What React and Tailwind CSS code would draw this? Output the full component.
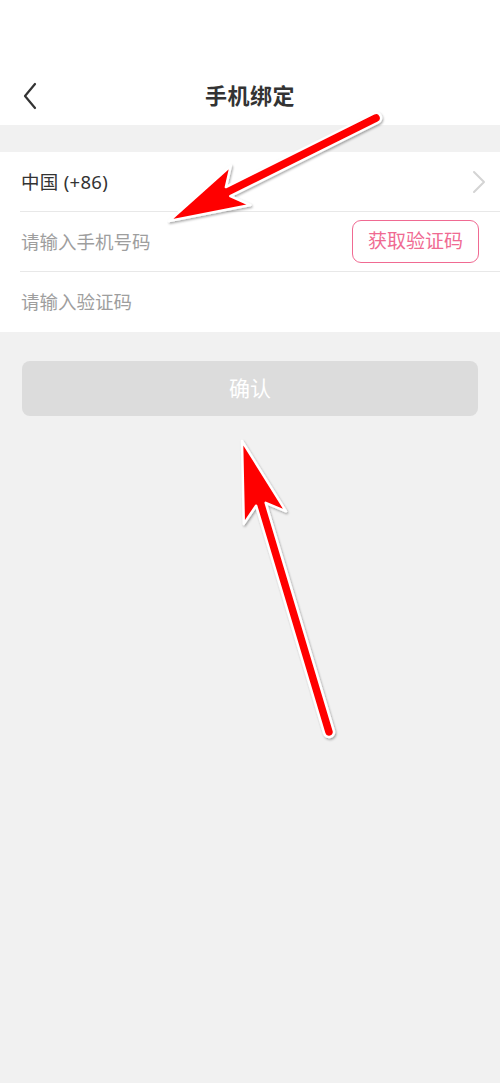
import React from 'react';

function arrowPath(tail, tip, opts) {
  const { head = 80, half = 22, notch = 66, w = 5 } = opts || {};
  const dx = tip[0] - tail[0];
  const dy = tip[1] - tail[1];
  const len = Math.hypot(dx, dy);
  const ux = dx / len, uy = dy / len;
  const px = -uy, py = ux;
  const pt = (d, o) => [tip[0] - ux * d + px * o, tip[1] - uy * d + py * o];
  const c1 = pt(head, half);
  const n1 = pt(notch, w);
  const t1 = [tail[0] + px * w, tail[1] + py * w];
  const t2 = [tail[0] - px * w, tail[1] - py * w];
  const n2 = pt(notch, -w);
  const c2 = pt(head, -half);
  const f = (p) => `${p[0].toFixed(1)} ${p[1].toFixed(1)}`;
  return `M ${f(tip)} L ${f(c1)} L ${f(n1)} L ${f(t1)} A ${w} ${w} 0 0 1 ${f(t2)} L ${f(n2)} L ${f(c2)} Z`;
}

function Arrows() {
  return (
    <svg className="absolute inset-0 pointer-events-none" width="500" height="1083" viewBox="0 0 500 1083">
      <defs>
        <filter id="sh" x="-20%" y="-20%" width="140%" height="140%">
          <feDropShadow dx="1" dy="1.5" stdDeviation="1.2" floodColor="#000" floodOpacity="0.35" />
        </filter>
      </defs>
      <g filter="url(#sh)">
        <path d={arrowPath([376, 118], [169, 221])} fill="#ff0000" stroke="#fff" strokeWidth="2.5" strokeLinejoin="round" />
        <path d={arrowPath([329, 732], [242, 441])} fill="#ff0000" stroke="#fff" strokeWidth="2.5" strokeLinejoin="round" />
      </g>
    </svg>
  );
}

export default function App() {
  return (
    <div
      className="relative min-h-[1083px] w-[500px] bg-[#f1f1f1] overflow-hidden"
      style={{ fontFamily: '"Noto Sans", "Noto Sans CJK SC", sans-serif' }}
    >
      <header className="bg-white h-[125px] pt-[66px]">
        <div className="relative h-[59px] flex items-center justify-center">
          <button className="absolute left-[18px] top-1/2 -translate-y-1/2 p-1">
            <svg width="16" height="28" viewBox="0 0 16 28" fill="none">
              <path d="M13 2 L3 14 L13 26" stroke="#333" strokeWidth="2.2" strokeLinecap="round" strokeLinejoin="round" />
            </svg>
          </button>
          <h1 className="text-[22px] font-bold text-[#333] tracking-[0.5px]">手机绑定</h1>
        </div>
      </header>

      <section className="mt-[27px] bg-white">
        <div className="ml-5 h-[60px] border-b border-[#e8e8e8] flex items-center justify-between pr-[14px]">
          <span className="pl-px text-[18.5px] text-[#333] tracking-[0.3px]">中国 (+86)</span>
          <svg width="14" height="24" viewBox="0 0 14 24" fill="none">
            <path d="M2 2 L12 12 L2 22" stroke="#d4d4d4" strokeWidth="2" strokeLinecap="round" strokeLinejoin="round" />
          </svg>
        </div>
        <div className="ml-5 h-[60px] border-b border-[#e8e8e8] flex items-center justify-between pr-[21px]">
          <span className="pl-px text-[18.5px] text-[#9e9e9e]">请输入手机号码</span>
          <button className="h-[43px] w-[127px] rounded-[9px] border-[1.5px] border-[#f06a92] text-[#f06a92] text-[19px]">
            获取验证码
          </button>
        </div>
        <div className="ml-5 h-[60px] flex items-center">
          <span className="pl-px text-[18.5px] text-[#9e9e9e]">请输入验证码</span>
        </div>
      </section>

      <div className="px-[22px] mt-[29px]">
        <button className="w-full h-[55px] rounded-[8px] bg-[#dcdcdc] text-white text-[21px]">确认</button>
      </div>

      <Arrows />
    </div>
  );
}
